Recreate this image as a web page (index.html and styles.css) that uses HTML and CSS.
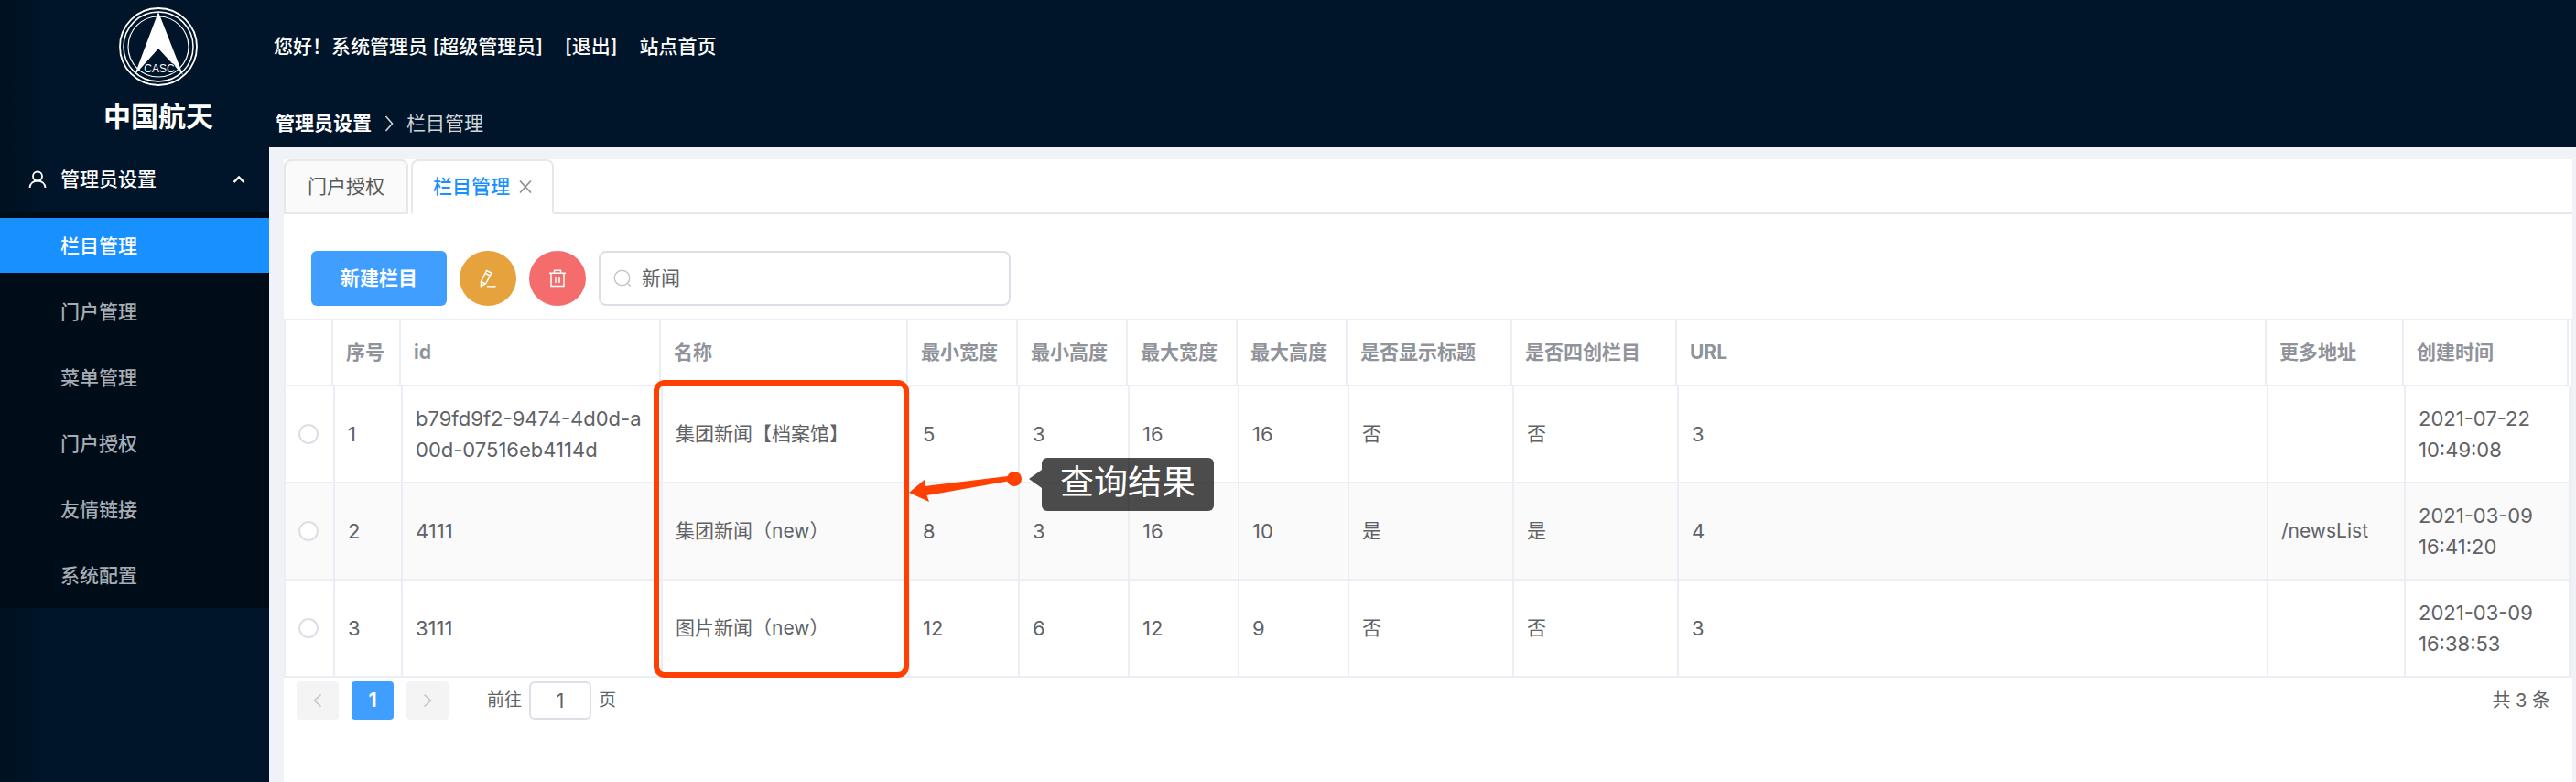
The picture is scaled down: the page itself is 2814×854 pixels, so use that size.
FILE: index.html
```html
<!DOCTYPE html>
<html lang="zh-CN">
<head>
<meta charset="utf-8">
<title>栏目管理</title>
<link rel="stylesheet" href="styles.css">
</head>
<body>
<div class="app">
  <aside class="sidebar">
    <div class="brand">
      <svg class="brand-mark" viewBox="0 0 88 88" aria-hidden="true">
        <g fill="none" stroke="#fff">
          <circle cx="44" cy="44" r="42" stroke-width="1.8"/>
          <circle cx="44" cy="44" r="38" stroke-width="1.5"/>
          <circle cx="44" cy="44" r="33" stroke-width="1.2"/>
        </g>
        <path d="M44 6 18 75 44 46 71 75Z" fill="#fff"/>
        <text x="45" y="72" text-anchor="middle" class="brand-code">CASC</text>
      </svg>
      <span class="brand-name">中国航天</span>
    </div>
    <nav class="menu">
      <button class="menu-title" type="button">
        <svg class="icon-user" viewBox="0 0 20 20" aria-hidden="true"><g fill="none" stroke="currentColor" stroke-width="1.800"><circle cx="10" cy="6.500" r="5"/><path d="M1.500 19c0-4.500 3.800-7.500 8.500-7.500s8.500 3 8.500 7.500"/></g></svg>
        <span>管理员设置</span>
        <svg class="icon-caret" viewBox="0 0 14 10" aria-hidden="true"><path d="M1.500 8 7 2.500 12.500 8" fill="none" stroke="currentColor" stroke-width="2.400"/></svg>
      </button>
      <ul class="submenu">
        <li><a class="menu-item menu-item-active" href="#">栏目管理</a></li>
        <li><a class="menu-item" href="#">门户管理</a></li>
        <li><a class="menu-item" href="#">菜单管理</a></li>
        <li><a class="menu-item" href="#">门户授权</a></li>
        <li><a class="menu-item" href="#">友情链接</a></li>
        <li><a class="menu-item" href="#">系统配置</a></li>
      </ul>
    </nav>
  </aside>

  <div class="page">
    <header class="header">
      <div class="account">
        <span>您好！系统管理员 [超级管理员]</span>
        <a href="#">[退出]</a>
        <a href="#">站点首页</a>
      </div>
      <div class="crumbs">
        <a class="crumb-root" href="#">管理员设置</a>
        <svg class="icon-crumb" viewBox="0 0 10 20" aria-hidden="true"><path d="M1.500 2 8.500 10 1.500 18" fill="none" stroke="currentColor" stroke-width="1.600"/></svg>
        <span>栏目管理</span>
      </div>
    </header>

    <main class="content">
      <div class="tabs">
        <button class="tab" type="button">门户授权</button>
        <button class="tab tab-active" type="button">栏目管理
          <svg class="icon-close" viewBox="0 0 14 14" aria-hidden="true"><path d="M1 0.500 13 13.500M13 0.500 1 13.500" fill="none" stroke="currentColor" stroke-width="1.600"/></svg>
        </button>
        <div class="tabs-rest"></div>
      </div>

      <div class="toolbar">
        <button class="button-new" type="button">新建栏目</button>
        <button class="button-round button-edit" type="button" aria-label="编辑">
          <svg viewBox="0 0 20 20" aria-hidden="true"><g fill="none" stroke="currentColor" stroke-width="1.500"><path d="M8.500 1.500 14 4 7.500 16 2.500 18.500 2.500 13.500ZM7 4.300 12.300 7M2.500 13.500 7.500 16"/><path d="M9 18.800H18.500"/></g></svg>
        </button>
        <button class="button-round button-delete" type="button" aria-label="删除">
          <svg viewBox="0 0 20 20" aria-hidden="true"><path d="M1 4.200H19M6.500 4V1.200H13.500V4M3 4.500V18.500H17V4.500M8 8V15M12 8V15" fill="none" stroke="currentColor" stroke-width="1.500"/></svg>
        </button>
        <label class="search">
          <svg viewBox="0 0 20 20" aria-hidden="true"><g fill="none" stroke="currentColor" stroke-width="1.400"><circle cx="9.500" cy="9.500" r="8.300"/><path d="M15.500 15.500 19 18.500"/></g></svg>
          <input type="text" value="新闻" aria-label="搜索">
        </label>
      </div>

      <div class="table-wrap">
        <table class="grid">
          <colgroup>
            <col class="col-pick"><col class="col-index"><col class="col-id"><col class="col-name">
            <col class="col-size"><col class="col-size"><col class="col-size"><col class="col-size">
            <col class="col-flag"><col class="col-flag"><col class="col-url"><col class="col-more"><col class="col-time">
          </colgroup>
          <thead>
            <tr><th></th><th>序号</th><th>id</th><th>名称</th><th>最小宽度</th><th>最小高度</th><th>最大宽度</th><th>最大高度</th><th>是否显示标题</th><th>是否四创栏目</th><th>URL</th><th>更多地址</th><th>创建时间</th></tr>
          </thead>
          <tbody>
            <tr><td class="pick"><input type="radio" name="row" aria-label="选择第1行"></td><td class="num">1</td><td class="num code">b79fd9f2-9474-4d0d-a00d-07516eb4114d</td><td>集团新闻【档案馆】</td><td class="num">5</td><td class="num">3</td><td class="num">16</td><td class="num">16</td><td>否</td><td>否</td><td class="num">3</td><td></td><td class="num time">2021-07-22 <br>10:49:08</td></tr>
            <tr><td class="pick"><input type="radio" name="row" aria-label="选择第2行"></td><td class="num">2</td><td class="num code">4111</td><td>集团新闻（new）</td><td class="num">8</td><td class="num">3</td><td class="num">16</td><td class="num">10</td><td>是</td><td>是</td><td class="num">4</td><td>/newsList</td><td class="num time">2021-03-09 <br>16:41:20</td></tr>
            <tr><td class="pick"><input type="radio" name="row" aria-label="选择第3行"></td><td class="num">3</td><td class="num code">3111</td><td>图片新闻（new）</td><td class="num">12</td><td class="num">6</td><td class="num">12</td><td class="num">9</td><td>否</td><td>否</td><td class="num">3</td><td></td><td class="num time">2021-03-09 <br>16:38:53</td></tr>
          </tbody>
        </table>
        <div class="mark-frame"></div>
        <svg class="mark-arrow" viewBox="0 0 126 56" aria-hidden="true"><g fill="#ff4000"><path d="M0 29 18 14 17.500 22 108 11V16.500L19.500 32 22 39Z"/><circle cx="115" cy="14" r="8"/></g></svg>
        <div class="mark-note">查询结果</div>
      </div>

      <div class="pager">
        <button class="page-button" type="button" disabled aria-label="上一页"><svg viewBox="0 0 10 16" aria-hidden="true"><path d="M8.500 1.500 1.500 8 8.500 14.500" fill="none" stroke="currentColor" stroke-width="1.600"/></svg></button>
        <button class="page-button page-current" type="button">1</button>
        <button class="page-button" type="button" disabled aria-label="下一页"><svg viewBox="0 0 10 16" aria-hidden="true"><path d="M1.500 1.500 8.500 8 1.500 14.500" fill="none" stroke="currentColor" stroke-width="1.600"/></svg></button>
        <label class="jump">前往<input type="text" value="1">页</label>
        <span class="total">共 3 条</span>
      </div>
    </main>
  </div>
</div>
</body>
</html>
```
FILE: styles.css
```css
* { box-sizing: border-box; }

body {
  margin: 0;
  background: #f0f2f7;
  color: #606266;
  font: 21px/34px "Inter", "Noto Sans CJK SC", sans-serif;
}

button, input { font: inherit; color: inherit; margin: 0; }
button { border: 0; padding: 0; background: none; cursor: pointer; }
a { color: inherit; text-decoration: none; }
svg { display: block; flex: none; }

.app { display: flex; min-height: 100vh; }

/* sidebar */
.sidebar {
  flex: none;
  width: 294px;
  background: linear-gradient(90deg, #001120, #001529 50px);
  color: #fff;
}
.brand {
  display: flex;
  flex-direction: column;
  align-items: center;
  gap: 12px;
  height: 160px;
  padding: 7px 0 0 52px;
}
.brand-mark { width: 88px; height: 88px; }
.brand-code { font: 12px "Liberation Sans", sans-serif; fill: #fff; stroke: #001529; stroke-width: 2px; paint-order: stroke; }
.brand-name { font-size: 30px; line-height: 40px; font-weight: 700; }
.menu-title {
  display: flex;
  align-items: center;
  width: 100%;
  height: 72px;
  padding: 0 26px 0 31px;
  font-weight: 500;
}
.icon-user { width: 20px; height: 20px; margin-right: 15px; }
.icon-caret { width: 14px; height: 10px; margin-left: auto; }
.submenu {
  display: grid;
  grid-auto-rows: 60px;
  gap: 12px;
  margin: 0;
  padding: 6px 0;
  list-style: none;
  background: #000c17;
}
.menu-item {
  display: block;
  height: 60px;
  padding: 0 66px;
  line-height: 62px;
  color: #a6adb4;
  font-weight: 500;
}
.menu-item-active { background: #1890ff; color: #fff; }

/* header */
.page { flex: 1; min-width: 0; display: flex; flex-direction: column; }
.header {
  height: 160px;
  padding: 34px 0 0 5px;
  background: #001529;
  color: #fff;
  font-weight: 500;
}
.account { display: flex; gap: 24px; }
.crumbs { display: flex; align-items: center; gap: 14px; margin-top: 50px; padding-left: 2px; font-weight: 400; color: #d0d4d8; }
.crumb-root { font-weight: 700; color: #fff; }
.icon-crumb { width: 10px; height: 20px; }

/* content card */
.content { flex: 1; margin: 14px 4px 0 16px; background: #fff; }
.tabs { display: flex; height: 60px; }
.tab {
  display: flex;
  align-items: center;
  gap: 10px;
  padding: 0 24px;
  margin-right: 3px;
  border: 2px solid #e8e8e8;
  border-radius: 8px 8px 0 0;
  background: #fafafa;
  color: #595959;
}
.tab-active { margin-right: 0; padding: 0 22px; border-bottom-color: #fff; background: #fff; color: #1890ff; font-weight: 500; }
.icon-close { width: 14px; height: 14px; color: #8c8c8c; }
.tabs-rest { flex: 1; border-bottom: 2px solid #e8e8e8; }

.toolbar { display: flex; align-items: center; gap: 14px; padding: 40px 30px 14px; }
.button-new { width: 148px; height: 60px; border-radius: 6px; background: #409eff; color: #fff; font-weight: 700; }
.button-round { display: grid; place-items: center; width: 62px; height: 60px; border-radius: 50%; color: #fff; }
.button-round svg { width: 20px; height: 20px; }
.button-edit { background: #e6a23c; }
.button-delete { background: #f56c6c; }
.search {
  display: flex;
  align-items: center;
  gap: 11px;
  width: 450px;
  height: 60px;
  padding: 0 14px;
  border: 2px solid #dcdfe6;
  border-radius: 8px;
}
.search svg { width: 20px; height: 20px; color: #c0c4cc; }
.search input { flex: 1; min-width: 0; border: 0; outline: 0; padding: 0; background: none; }

/* data grid */
.table-wrap { position: relative; border: 2px solid #ebeef5; border-width: 2px 2px 0; }
.grid { width: 100%; table-layout: fixed; border-collapse: separate; border-spacing: 0; }
.col-pick { width: 52px; }
.col-index { width: 74px; }
.col-id { width: 284px; }
.col-name { width: 270px; }
.col-size { width: 120px; }
.col-flag { width: 180px; }
.col-more { width: 150px; }
.col-time { width: 182px; }
.grid th, .grid td { padding: 0 14px; text-align: left; border-bottom: 2px solid #ebeef5; }
.grid th { height: 72px; border-right: 2px solid #ebeef5; color: #909399; font-weight: 700; white-space: nowrap; }
.grid th:last-child { border-right-color: #fff; box-shadow: inset -2px 0 #ebeef5; }
.grid td { height: 106px; border-left: 2px solid #ebeef5; }
.grid td:first-child { border-left: 0; }
.grid td:last-child { border-right: 2px solid #ebeef5; }
.grid tbody tr:nth-child(even) { background: #fafafa; }
.grid .num { font-size: 22px; }
.grid .code { word-break: break-all; }
.grid .time { white-space: nowrap; }
.pick input { display: block; appearance: none; width: 22px; height: 22px; border: 2px solid #dcdfe6; border-radius: 50%; background: #fff; }

/* annotation over the grid */
.mark-frame { position: absolute; left: 402px; top: 65px; width: 279px; height: 325px; border: 6px solid #ff4000; border-radius: 12px; }
.mark-arrow { position: absolute; left: 681px; top: 159px; width: 126px; height: 56px; }
.mark-note {
  position: absolute;
  left: 826px;
  top: 150px;
  padding: 6px 20px 10px;
  border-radius: 6px;
  background: rgba(0, 0, 0, 0.7);
  color: #fff;
  font-size: 37px;
  line-height: 42px;
}
.mark-note::before {
  content: "";
  position: absolute;
  left: -14px;
  top: 13px;
  border: solid transparent;
  border-width: 10px 14px 10px 0;
  border-right-color: rgba(0, 0, 0, 0.7);
}

/* pager */
.pager { display: flex; align-items: center; gap: 14px; padding: 4px 24px 0 14px; font-size: 19px; }
.page-button { display: grid; place-items: center; width: 46px; height: 42px; border-radius: 4px; background: #f4f4f5; color: #c0c4cc; }
.page-button svg { width: 10px; height: 16px; }
.page-current { background: #409eff; color: #fff; font-size: 21px; font-weight: 700; }
.jump { display: flex; align-items: center; gap: 8px; margin-left: 28px; }
.jump input { width: 68px; height: 42px; border: 2px solid #dcdfe6; border-radius: 6px; font-size: 21px; text-align: center; }
.total { margin-left: auto; font-size: 20px; }
```
